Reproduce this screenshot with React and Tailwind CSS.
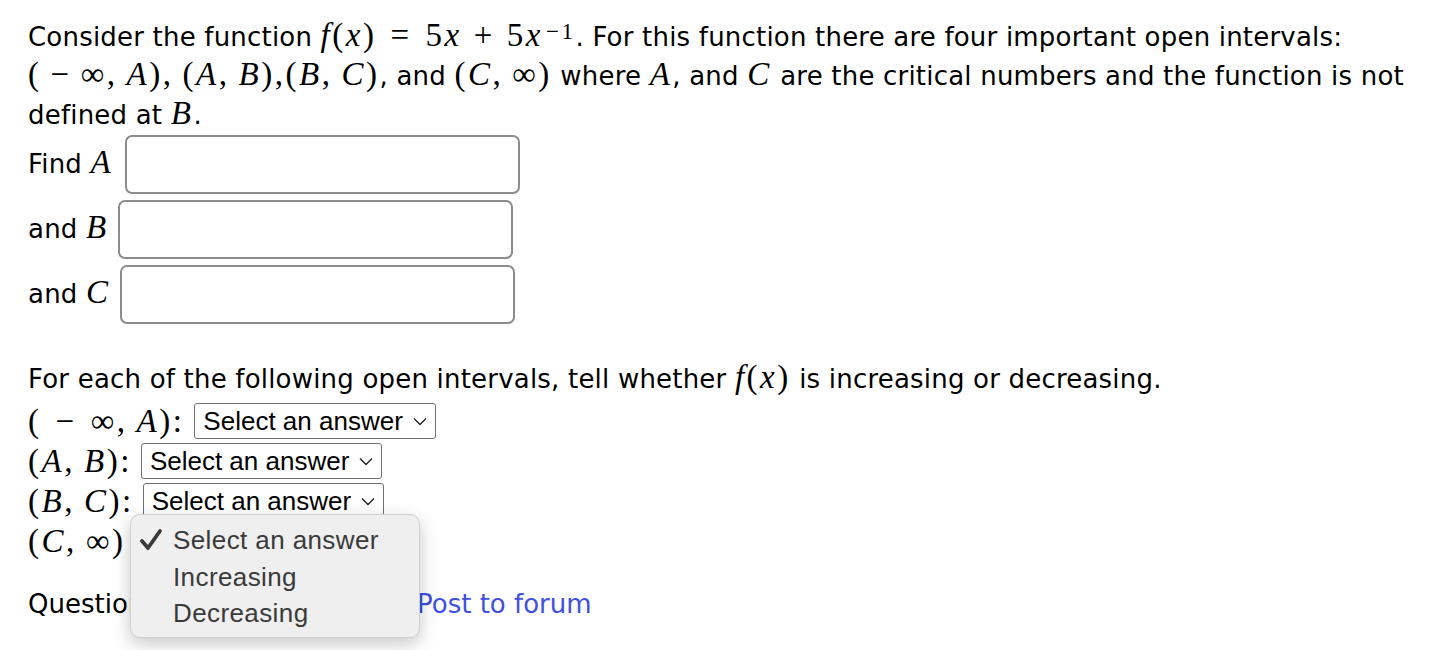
import { useState } from "react";

const body = "font-['DejaVu_Sans',Verdana,sans-serif] tracking-[0.2px]";
const mathFont = "font-['Liberation_Serif',serif] text-[33px] leading-none tracking-[2.5px]";
const ts = "\u2009";

const V = ({ children }) => <i className="italic">{children}</i>;

const Chevron = () => (
  <svg width="14" height="9" viewBox="0 0 14 9" className="ml-[10px] shrink-0">
    <path d="M1 1.5 L7 7.5 L13 1.5" fill="none" stroke="#222" strokeWidth="1.4" />
  </svg>
);

const SelectBox = () => (
  <div className="inline-flex items-center h-[36px] px-[8px] border border-[#6f6f6f] rounded-[3px] bg-white font-['Liberation_Sans',Arial,sans-serif] text-[26px] leading-none tracking-normal text-black">
    <span>Select an answer</span>
    <Chevron />
  </div>
);

const AnswerInput = () => (
  <input
    type="text"
    className="w-[395px] h-[59px] border-2 border-[#8c8c8c] rounded-[7px] bg-white outline-none px-3"
  />
);

export default function App() {
  const [open] = useState(true);

  return (
    <div className={`relative w-[1438px] h-[650px] bg-white text-black pl-[28px] pt-[18px] text-[26px] leading-[39px] ${body}`}>
      {/* Question text */}
      <p className="whitespace-nowrap">
        Consider the function{" "}
        <span className={mathFont}>
          <V>f</V>(<V>x</V>)<span className="mx-[14px]">=</span>5<V>x</V>
          <span className="mx-[12px]">+</span>5<V>x</V>
          <sup className="text-[23px] relative top-[-7px] ml-[3px]">−1</sup>
        </span>
        . For this function there are four important open intervals:
        <br />
        <span className={mathFont}>
          (<span className="mx-[9px]">−</span>∞,{ts}<V>A</V>),{ts}(<V>A</V>,{ts}<V>B</V>),(<V>B</V>,{ts}<V>C</V>)
        </span>
        , and{" "}
        <span className={mathFont}>
          (<V>C</V>,{ts}∞)
        </span>{" "}
        where <span className={mathFont}><V>A</V></span>, and{" "}
        <span className={mathFont}><V>C</V></span> are the critical numbers and the function is not
        <br />
        defined at <span className={mathFont}><V>B</V></span>.
      </p>

      {/* Inputs */}
      <div className="flex flex-col gap-[6px]">
        <div className="flex items-center gap-[12px]">
          <span>
            Find <span className={mathFont}><V>A</V></span>
          </span>
          <AnswerInput />
        </div>
        <div className="flex items-center gap-[9px]">
          <span>
            and <span className={mathFont}><V>B</V></span>
          </span>
          <AnswerInput />
        </div>
        <div className="flex items-center gap-[9px]">
          <span>
            and <span className={mathFont}><V>C</V></span>
          </span>
          <AnswerInput />
        </div>
      </div>

      <p className="mt-[36px] whitespace-nowrap">
        For each of the following open intervals, tell whether{" "}
        <span className={mathFont}>
          <V>f</V>(<V>x</V>)
        </span>{" "}
        is increasing or decreasing.
      </p>

      {/* Interval selects */}
      <div className="flex flex-col mt-[2px]">
        <div className="flex items-center h-[40px] gap-[10px]">
          <span className={mathFont}>
            (<span className="mx-[14px]">−</span>∞,{ts}<V>A</V>):
          </span>
          <SelectBox />
        </div>
        <div className="flex items-center h-[40px] gap-[9px]">
          <span className={mathFont}>
            (<V>A</V>,{ts}<V>B</V>):
          </span>
          <SelectBox />
        </div>
        <div className="flex items-center h-[40px] gap-[9px]">
          <span className={mathFont}>
            (<V>B</V>,{ts}<V>C</V>):
          </span>
          <SelectBox />
        </div>
        <div className="flex items-center h-[40px] gap-[9px]">
          <span className={mathFont}>
            (<V>C</V>,{ts}∞)<span className="ml-[4px]">:</span>
          </span>
          <SelectBox />
        </div>
      </div>

      {/* Footer */}
      <div className="flex items-center mt-[24px] whitespace-nowrap tracking-normal">
        <span className="w-[389px] overflow-hidden">Question Help: Message instructor</span>
        <a href="#" className="text-[#3f50e3]">
          Post to forum
        </a>
      </div>

      {/* Open select popup */}
      {open && (
        <div className="absolute left-[130px] top-[514px] w-[290px] h-[124px] rounded-[10px] bg-[#efefef] border border-[#cfcfcf] shadow-[0_6px_18px_rgba(0,0,0,0.22)] pt-[6px] font-['Liberation_Sans',Arial,sans-serif] text-[26px] text-[#3a3a3a] tracking-[0.4px]">
          <div className="flex items-center h-[38px]">
            <svg width="42" height="24" viewBox="0 0 42 24" className="shrink-0">
              <path d="M11 13 L17 20 L29 3" fill="none" stroke="#3a3a3a" strokeWidth="3.8" strokeLinecap="round" strokeLinejoin="round" />
            </svg>
            <span>Select an answer</span>
          </div>
          <div className="flex items-center h-[36px] pl-[42px]">Increasing</div>
          <div className="flex items-center h-[36px] pl-[42px]">Decreasing</div>
        </div>
      )}
    </div>
  );
}
